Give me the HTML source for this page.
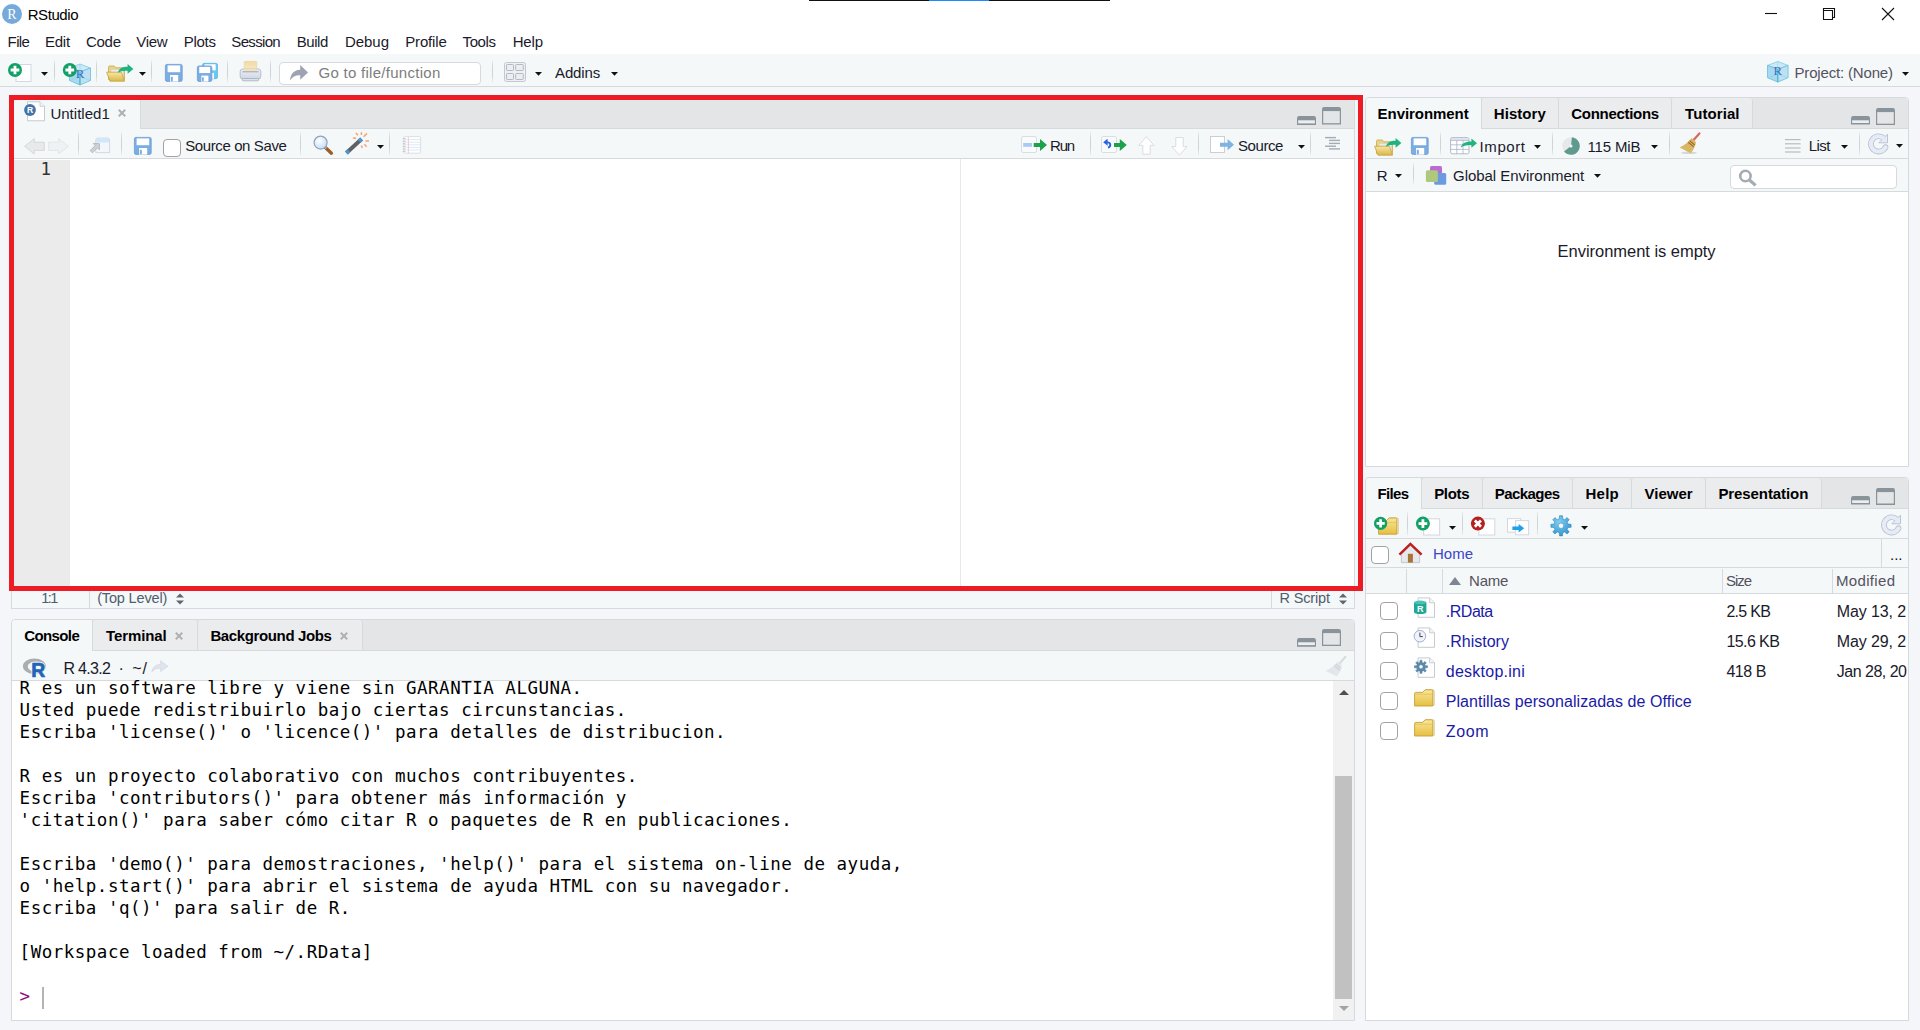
<!DOCTYPE html>
<html lang="es"><head><meta charset="utf-8"><title>RStudio</title>
<style>
html,body{margin:0;padding:0;}
body{width:1920px;height:1030px;overflow:hidden;background:#f4f6f9;position:relative;font-family:"Liberation Sans",sans-serif;}
.a{position:absolute;box-sizing:border-box;}
.t{position:absolute;white-space:pre;display:block;}
svg{position:absolute;overflow:visible;}
</style></head><body>
<div class="a" style="left:0px;top:0px;width:1920px;height:54px;background:#ffffff;"></div>
<div class="a" style="left:809px;top:0px;width:301px;height:1px;background:#111111;"></div>
<div class="a" style="left:929px;top:0px;width:60px;height:1px;background:#1a8cff;"></div>
<div class="a" style="left:2px;top:4px;width:20px;height:20px;border-radius:50%;background:#75aadb;"></div>
<svg style="left:1760px;top:4px" width="150" height="22" viewBox="0 0 150 22"><g fill="none" stroke="#111" stroke-width="1.1"><path d="M5 9.5H17"/><path d="M63.5 6.5V4.5H74.5V13.5H72.5M63.5 6.5H72.5V15.5H63.5Z"/><path d="M122 4L134 16M134 4L122 16"/></g></svg>
<div class="a" style="left:0px;top:54px;width:1920px;height:33px;background:#f4f8f9;border-bottom:1px solid #d6dadc;"></div>
<div class="a" style="left:54px;top:60px;width:1px;height:22px;background:linear-gradient(#e9edef,#cfd4d7 30%,#cfd4d7 70%,#e9edef);"></div>
<div class="a" style="left:96px;top:60px;width:1px;height:22px;background:linear-gradient(#e9edef,#cfd4d7 30%,#cfd4d7 70%,#e9edef);"></div>
<div class="a" style="left:151px;top:60px;width:1px;height:22px;background:linear-gradient(#e9edef,#cfd4d7 30%,#cfd4d7 70%,#e9edef);"></div>
<div class="a" style="left:227px;top:60px;width:1px;height:22px;background:linear-gradient(#e9edef,#cfd4d7 30%,#cfd4d7 70%,#e9edef);"></div>
<div class="a" style="left:270px;top:60px;width:1px;height:22px;background:linear-gradient(#e9edef,#cfd4d7 30%,#cfd4d7 70%,#e9edef);"></div>
<div class="a" style="left:492px;top:60px;width:1px;height:22px;background:linear-gradient(#e9edef,#cfd4d7 30%,#cfd4d7 70%,#e9edef);"></div>
<svg style="left:41px;top:71.5px" width="7" height="3.7" viewBox="0 0 7 3.7"><path d="M0 0H7L3.5 3.7Z" fill="#111"/></svg>
<svg style="left:139px;top:71.5px" width="7" height="3.7" viewBox="0 0 7 3.7"><path d="M0 0H7L3.5 3.7Z" fill="#111"/></svg>
<svg style="left:535px;top:71.5px" width="7" height="3.7" viewBox="0 0 7 3.7"><path d="M0 0H7L3.5 3.7Z" fill="#111"/></svg>
<svg style="left:610.5px;top:71.5px" width="7" height="3.7" viewBox="0 0 7 3.7"><path d="M0 0H7L3.5 3.7Z" fill="#111"/></svg>
<div class="a" style="left:279px;top:62px;width:202px;height:23px;background:#fff;border:1px solid #d6dadc;border-radius:4px;"></div>
<svg style="left:1902px;top:71.5px" width="7" height="3.7" viewBox="0 0 7 3.7"><path d="M0 0H7L3.5 3.7Z" fill="#111"/></svg>
<svg style="left:8px;top:63px" width="24" height="20" viewBox="0 0 24 20"><rect x="8" y="1.5" width="15" height="17" fill="#fff" stroke="#d3d8e0" stroke-width="1"/><circle cx="7" cy="7" r="7" fill="#12a067"/><path d="M2.66 5.6H5.6V2.66H8.4V5.6H11.34V8.4H8.4V11.34H5.6V8.4H2.66Z" fill="#fff"/></svg>
<svg style="left:62px;top:62px" width="30" height="24" viewBox="0 0 30 24"><path d="M18.00 2.00L28.50 6.00L18.00 10.00L7.50 6.00Z" fill="#cfe8f7" stroke="#7ccbe0" stroke-width="0.8" stroke-linejoin="round"/><path d="M7.50 6.00L18.00 10.00L18.00 23.00L7.50 18.50Z" fill="#a9d9ef" stroke="#63c0d8" stroke-width="0.8" stroke-linejoin="round"/><path d="M28.50 6.00L18.00 10.00L18.00 23.00L28.50 18.50Z" fill="#bfe0f4" stroke="#63c0d8" stroke-width="0.8" stroke-linejoin="round"/><path d="M18.00 2.00V15.00L7.50 18.50M18.00 15.00L28.50 18.50" fill="none" stroke="#7fd0e0" stroke-width="0.6" opacity="0.8"/><path d="M18.00 10.00V23.00" stroke="#3fb6cf" stroke-width="0.9"/><text x="18.00" y="16.20" text-anchor="middle" font-family="Liberation Serif,serif" font-size="13.0" fill="#3a6fbf">R</text><circle cx="7.8" cy="8" r="7" fill="#12a067"/><path d="M3.46 6.6H6.3999999999999995V3.66H9.2V6.6H12.14V9.4H9.2V12.34H6.3999999999999995V9.4H3.46Z" fill="#fff"/></svg>
<svg width="0" height="0" style="left:0;top:0"><defs><linearGradient id="gfold" x1="0" y1="0" x2="0" y2="1"><stop offset="0" stop-color="#f7e7a4"/><stop offset="1" stop-color="#dbb64c"/></linearGradient><linearGradient id="gprn" x1="0" y1="0" x2="0" y2="1"><stop offset="0" stop-color="#eef1f6"/><stop offset="1" stop-color="#cfd6e2"/></linearGradient><linearGradient id="gpap" x1="0" y1="0" x2="0" y2="1"><stop offset="0" stop-color="#f0d9a6"/><stop offset="1" stop-color="#f8ebca"/></linearGradient></defs></svg>
<svg style="left:106px;top:64px" width="28" height="19" viewBox="0 0 28 19"><g transform="translate(0 0)"><path d="M2.5 15.5V3.2Q2.5 2 3.7 2H8.2L10 3.8H17.3Q18.5 3.8 18.5 5V15.5Z" fill="#e9d28a" stroke="#c9a945" stroke-width="0.8"/><path d="M5 5.5H17.5V15H5Z" fill="#ebebeb" stroke="#cfcfcf" stroke-width="0.5"/><path d="M0.6 8.2H15.4L18.6 17.2H4Z" fill="url(#gfold)" stroke="#c9a239" stroke-width="0.8" stroke-linejoin="round"/><path d="M12 8.8C12.8 4.6 16.6 2.6 21.6 2.8V0L27.4 4.9L21.6 9.8V6.8C17.6 6.4 14.6 7 12 8.8Z" fill="#1fb37e"/></g></svg>
<svg style="left:165px;top:64px" width="18" height="18" viewBox="0 0 18 18"><rect x="0.40" y="0.40" width="16.80" height="17.00" rx="1.6" fill="#7aade2" stroke="#6a9bd6" stroke-width="0.8"/><rect x="2.60" y="1.40" width="12.60" height="6.80" fill="#fff"/><rect x="5.00" y="11.00" width="8.20" height="6.60" fill="#fff"/><rect x="5.80" y="12.80" width="2.00" height="4.40" fill="#7aade2"/></svg>
<svg style="left:197px;top:63px" width="22" height="19" viewBox="0 0 22 19"><rect x="5.55" y="0.36" width="14.89" height="15.28" rx="1.6" fill="#6cc7f0" stroke="#55b6e6" stroke-width="0.8"/><rect x="7.50" y="1.26" width="11.17" height="6.11" fill="#fff"/><rect x="9.63" y="9.89" width="7.27" height="5.93" fill="#fff"/><rect x="10.34" y="11.51" width="1.77" height="3.96" fill="#6cc7f0"/><rect x="0.35" y="2.96" width="14.51" height="15.47" rx="1.6" fill="#7aade2" stroke="#6a9bd6" stroke-width="0.8"/><rect x="2.25" y="3.87" width="10.88" height="6.19" fill="#fff"/><rect x="4.32" y="12.61" width="7.08" height="6.01" fill="#fff"/><rect x="5.01" y="14.25" width="1.73" height="4.00" fill="#7aade2"/></svg>
<svg style="left:239px;top:61px" width="24" height="21" viewBox="0 0 24 21"><rect x="5.2" y="0.3" width="12.6" height="10" rx="0.8" fill="url(#gpap)" stroke="#e9cf96" stroke-width="0.5"/><rect x="1.2" y="8" width="20.6" height="10" rx="2.6" fill="url(#gprn)" stroke="#a9b2c4" stroke-width="0.8"/><rect x="5.2" y="7.6" width="12.6" height="2.6" fill="#f3e2b8"/><path d="M3.4 10.8H19.6" stroke="#8f9ab0" stroke-width="0.9"/><rect x="3.4" y="17.6" width="16.2" height="2.2" rx="0.8" fill="#e3e7ee" stroke="#9aa4b8" stroke-width="0.7"/></svg>
<svg style="left:289px;top:64px" width="20" height="18" viewBox="0 0 20 18"><path d="M1 16.5C1.6 9.6 5.4 6 11.2 5.8V1L19 8.4L11.2 15.8V11.2C6.6 11 3.4 12.6 1 16.5Z" fill="#9ea2b2"/></svg>
<svg style="left:504px;top:62px" width="22" height="20" viewBox="0 0 22 20"><rect x="0.5" y="0.5" width="21" height="19" rx="2" fill="#eef0f3" stroke="#c3c9d2"/><g fill="#eceef1" stroke="#aab3c0" stroke-width="0.9"><rect x="2.5" y="2.5" width="7" height="6" rx="0.8"/><rect x="11.7" y="2.5" width="7.6" height="6" rx="0.8"/><rect x="2.5" y="11.5" width="7" height="6" rx="0.8"/><rect x="11.7" y="11.5" width="7.6" height="6" rx="0.8"/></g></svg>
<svg style="left:1767px;top:61px" width="22" height="22" viewBox="0 0 22 22"><path d="M10.79 0.50L21.08 4.42L10.79 8.34L0.50 4.42Z" fill="#cfe8f7" stroke="#7ccbe0" stroke-width="0.8" stroke-linejoin="round"/><path d="M0.50 4.42L10.79 8.34L10.79 21.08L0.50 16.67Z" fill="#a9d9ef" stroke="#63c0d8" stroke-width="0.8" stroke-linejoin="round"/><path d="M21.08 4.42L10.79 8.34L10.79 21.08L21.08 16.67Z" fill="#bfe0f4" stroke="#63c0d8" stroke-width="0.8" stroke-linejoin="round"/><path d="M10.79 0.50V13.24L0.50 16.67M10.79 13.24L21.08 16.67" fill="none" stroke="#7fd0e0" stroke-width="0.6" opacity="0.8"/><path d="M10.79 8.34V21.08" stroke="#3fb6cf" stroke-width="0.9"/><text x="10.79" y="14.42" text-anchor="middle" font-family="Liberation Serif,serif" font-size="12.7" fill="#3a6fbf">R</text></svg>
<div class="a" style="left:11px;top:97px;width:1344px;height:494px;background:#fff;border:1px solid #d6dadc;"></div>
<div class="a" style="left:14px;top:100px;width:1340px;height:29px;background:#e4e5e7;border-bottom:1px solid #d6dadc;"></div>
<div class="a" style="left:14px;top:100px;width:127px;height:29px;background:#f4f8f9;border-right:1px solid #d6dadc;"></div>
<div class="a" style="left:14px;top:129px;width:1340px;height:30px;background:#f4f8f9;border-bottom:1px solid #d6dadc;"></div>
<div class="a" style="left:14px;top:160px;width:56px;height:426px;background:#ebebeb;"></div>
<div class="a" style="left:960px;top:159px;width:1px;height:427px;background:#e8e8e8;"></div>
<div class="a" style="left:78px;top:132px;width:1px;height:23px;background:linear-gradient(#e9edef,#cfd4d7 30%,#cfd4d7 70%,#e9edef);"></div>
<div class="a" style="left:121px;top:132px;width:1px;height:23px;background:linear-gradient(#e9edef,#cfd4d7 30%,#cfd4d7 70%,#e9edef);"></div>
<div class="a" style="left:300px;top:132px;width:1px;height:23px;background:linear-gradient(#e9edef,#cfd4d7 30%,#cfd4d7 70%,#e9edef);"></div>
<div class="a" style="left:389px;top:132px;width:1px;height:23px;background:linear-gradient(#e9edef,#cfd4d7 30%,#cfd4d7 70%,#e9edef);"></div>
<div class="a" style="left:1090px;top:132px;width:1px;height:23px;background:linear-gradient(#e9edef,#cfd4d7 30%,#cfd4d7 70%,#e9edef);"></div>
<div class="a" style="left:1198px;top:132px;width:1px;height:23px;background:linear-gradient(#e9edef,#cfd4d7 30%,#cfd4d7 70%,#e9edef);"></div>
<div class="a" style="left:1310px;top:132px;width:1px;height:23px;background:linear-gradient(#e9edef,#cfd4d7 30%,#cfd4d7 70%,#e9edef);"></div>
<svg style="left:377px;top:145.2px" width="7" height="3.7" viewBox="0 0 7 3.7"><path d="M0 0H7L3.5 3.7Z" fill="#111"/></svg>
<svg style="left:1297.5px;top:144.6px" width="7" height="3.7" viewBox="0 0 7 3.7"><path d="M0 0H7L3.5 3.7Z" fill="#111"/></svg>
<div class="a" style="left:163px;top:139px;width:18px;height:18px;background:#fff;border:1px solid #a2a2a2;border-radius:4px;"></div>
<svg style="left:23px;top:101px" width="23" height="21" viewBox="0 0 23 21"><path d="M4.5 0.8H17L21.5 5.3V19.8H4.5Z" fill="#fff" stroke="#bfc5cc" stroke-width="0.9" stroke-linejoin="round"/><path d="M17 0.8V5.3H21.5" fill="#f2f4f6" stroke="#bfc5cc" stroke-width="0.8" stroke-linejoin="round"/><circle cx="7" cy="9" r="5.9" fill="#4573aa"/><text x="7" y="12.1" text-anchor="middle" font-family="Liberation Sans,sans-serif" font-weight="700" font-size="8.6" fill="#fff">R</text></svg>
<svg style="left:118px;top:109px" width="8" height="8" viewBox="0 0 8 8"><path d="M0.8 0.8L7.2 7.2M7.2 0.8L0.8 7.2" stroke="#adb1b5" stroke-width="2" fill="none"/></svg>
<svg style="left:24px;top:138px" width="21" height="17" viewBox="0 0 21 17"><path d="M0.6 8.3L10.3 0.6V4.2H20.3V12.4H10.3V16L0.6 8.3Z" fill="#e7e9eb" stroke="#d2d5d8" stroke-width="0.9" stroke-linejoin="round"/></svg>
<svg style="left:48px;top:138px" width="21" height="17" viewBox="0 0 21 17"><path d="M20.4 8.3L10.7 0.6V4.2H0.7V12.4H10.7V16L20.4 8.3Z" fill="#eff2f4" stroke="#e0e3e6" stroke-width="0.9" stroke-linejoin="round"/></svg>
<svg style="left:89px;top:137px" width="22" height="17" viewBox="0 0 22 17"><path d="M6.8 3Q6.8 1 8.8 1H18.6Q20.6 1 20.6 3V15.6H6.8Z" fill="#f3f6fa" stroke="#c9d1dc" stroke-width="0.8"/><path d="M7.2 3Q7.2 1.4 8.8 1.4H18.6Q20.2 1.4 20.2 3V5.4H7.2Z" fill="#d2e6fb"/><path d="M1.2 13.6L6.2 8.6L4.2 6.6H10.4V12.8L8.4 10.8L3.4 15.8Z" fill="#cdd2d8" stroke="#a4aab2" stroke-width="0.7" stroke-linejoin="round"/></svg>
<svg style="left:134px;top:137px" width="18" height="18" viewBox="0 0 18 18"><rect x="0.40" y="0.40" width="16.80" height="17.00" rx="1.6" fill="#7aade2" stroke="#6a9bd6" stroke-width="0.8"/><rect x="2.60" y="1.40" width="12.60" height="6.80" fill="#fff"/><rect x="5.00" y="11.00" width="8.20" height="6.60" fill="#fff"/><rect x="5.80" y="12.80" width="2.00" height="4.40" fill="#7aade2"/></svg>
<svg width="0" height="0" style="left:0;top:0"><defs><radialGradient id="glens" cx="0.4" cy="0.35" r="0.7"><stop offset="0" stop-color="#ffffff"/><stop offset="1" stop-color="#c3dbf6"/></radialGradient></defs></svg>
<svg style="left:312.5px;top:134.6px" width="21" height="21" viewBox="0 0 21 21"><g transform="translate(0 0)"><path d="M12.4 12.6L18.4 18.2" stroke="#9c5e27" stroke-width="3.4" stroke-linecap="round"/><path d="M11.2 11.4L13.4 13.4" stroke="#7fb0d8" stroke-width="2.4"/><circle cx="7.6" cy="7.6" r="6.5" fill="url(#glens)" stroke="#8ea2ba" stroke-width="1.2"/></g></svg>
<svg style="left:343px;top:131px" width="28" height="24" viewBox="0 0 28 24"><path d="M3.4 22L18.6 8" stroke="#5e6266" stroke-width="4" /><path d="M3.4 22L5.8 19.8" stroke="#4a96cf" stroke-width="4.2"/><path d="M16.2 10.2L18.6 8" stroke="#4a96cf" stroke-width="4.2"/><g stroke="#f6a273" stroke-width="1.5" stroke-linecap="butt"><path d="M18.4 1.2V4"/><path d="M12.8 2L15 4.2"/><path d="M10 6.8L13.2 7.6"/><path d="M24 2.4L20.6 5.8"/><path d="M22.4 10H26"/><path d="M21.4 13.2L23.6 15.8"/><path d="M18.4 14.6L19.2 17"/></g></svg>
<svg style="left:402px;top:136px" width="20" height="18" viewBox="0 0 20 18"><rect x="2" y="0.6" width="16.6" height="16.6" rx="1.2" fill="#fff" stroke="#d4d7db" stroke-width="0.8"/><g stroke="#cfe0f5" stroke-width="0.7"><path d="M3 3.6H18"/><path d="M3 6.2H18"/><path d="M3 8.8H18"/><path d="M3 11.4H18"/><path d="M3 14H18"/></g><path d="M6.4 1V17" stroke="#f4b8b8" stroke-width="0.7"/><g stroke="#b9bdc2" stroke-width="0.9"><path d="M0.8 2.6H3.6"/><path d="M0.8 5.2H3.6"/><path d="M0.8 7.8H3.6"/><path d="M0.8 10.4H3.6"/><path d="M0.8 13H3.6"/><path d="M0.8 15.4H3.6"/></g></svg>
<svg style="left:1021px;top:136px" width="27" height="17" viewBox="0 0 27 17"><rect x="0.5" y="0.5" width="15" height="16" rx="1.6" fill="#f9fafc" stroke="#d6dade" stroke-width="0.9"/><rect x="2.2" y="7" width="8.8" height="3.8" fill="#a9c8f5"/><path d="M12.7 6.9H19V3L26 9L19 15V11.1H12.7Z" fill="#1ba24b"/></svg>
<svg style="left:1101px;top:136px" width="27" height="17" viewBox="0 0 27 17"><rect x="0.5" y="0.5" width="15" height="16" rx="1.6" fill="#f9fafc" stroke="#d6dade" stroke-width="0.9"/><path d="M7 11.6C10.2 10.6 10.2 6.2 6 6.4" fill="none" stroke="#2a62e6" stroke-width="1.9"/><path d="M2.2 6.2L6.6 2.8V9.8Z" fill="#2a62e6"/><path d="M13 6.9H18.8V3L25.8 9L18.8 15V11.1H13Z" fill="#1ba24b"/></svg>
<svg style="left:1137.5px;top:136px" width="17" height="19" viewBox="0 0 17 19"><path d="M8.4 0.6L16 9.4H12.2V18.2H4.8V9.4H0.8Z" fill="#fff" stroke="#d6d9dd" stroke-width="0.9" stroke-linejoin="round"/></svg>
<svg style="left:1170.5px;top:137px" width="17" height="19" viewBox="0 0 17 19"><path d="M8.4 18.2L16 9.6H12.2V0.6H4.8V9.6H0.8Z" fill="#fff" stroke="#d6d9dd" stroke-width="0.9" stroke-linejoin="round"/></svg>
<svg style="left:1210px;top:136px" width="25" height="17" viewBox="0 0 25 17"><rect x="0.5" y="0.5" width="14" height="16" fill="#fff" stroke="#c6cacf" stroke-width="0.9"/><path d="M10 6.699999999999999H17.6V3.0999999999999996L24 8.7L17.6 14.299999999999999V10.7H10Z" fill="#7fb3e1"/></svg>
<svg style="left:1324px;top:136px" width="18" height="15" viewBox="0 0 18 15"><g stroke="#a3abb3" stroke-width="1.4"><path d="M1 1.6H12"/><path d="M5 4.4H16"/><path d="M5 7.4H16"/><path d="M1 10.2H12"/><path d="M5 12.9H16"/></g></svg>
<svg style="left:1297px;top:115.7px" width="19" height="9" viewBox="0 0 19 9"><path d="M0 9V2.2Q0 0 2.2 0H16.8Q19 0 19 2.2V9Z" fill="#89939b"/><rect x="1.1" y="4.3" width="16.8" height="3.10" fill="#eceeef"/></svg>
<svg style="left:1322px;top:107.1px" width="19" height="17.6" viewBox="0 0 19 17.6"><path d="M0 17.6V2.2Q0 0 2.2 0H16.8Q19 0 19 2.2V17.6Z" fill="#89939b"/><rect x="1.2" y="4.1" width="16.6" height="12.10" fill="#e4e5e7"/></svg>
<div class="a" style="left:11px;top:591px;width:1344px;height:18px;background:#f4f8f9;border:1px solid #d6dadc;border-top:none;"></div>
<div class="a" style="left:89px;top:591px;width:1px;height:17px;background:#d6dadc;"></div>
<div class="a" style="left:1271px;top:591px;width:1px;height:17px;background:#d6dadc;"></div>
<svg style="left:175.5px;top:593.3px" width="8" height="12" viewBox="0 0 8 12"><path d="M0 4.5H8L4 0.5Z M0 7.5H8L4 11.5Z" fill="#5f6670"/></svg>
<svg style="left:1338.7px;top:593.3px" width="8" height="12" viewBox="0 0 8 12"><path d="M0 4.5H8L4 0.5Z M0 7.5H8L4 11.5Z" fill="#5f6670"/></svg>
<div class="a" style="left:11px;top:619px;width:1344px;height:402px;background:#fff;border:1px solid #d6dadc;border-radius:4px 4px 0 0;"></div>
<div class="a" style="left:12px;top:620px;width:1342px;height:31px;background:#e4e5e7;border-bottom:1px solid #d6dadc;border-radius:4px 4px 0 0;"></div>
<div class="a" style="left:12px;top:620px;width:81px;height:31px;background:#f4f8f9;border-right:1px solid #d6dadc;border-radius:4px 0 0 0;"></div>
<div class="a" style="left:93px;top:620px;width:105px;height:30px;background:#ebecee;border-right:1px solid #d6dadc;border-radius:3px 3px 0 0;"></div>
<div class="a" style="left:198px;top:620px;width:165px;height:30px;background:#ebecee;border-right:1px solid #d6dadc;border-radius:3px 3px 0 0;"></div>
<div class="a" style="left:12px;top:651px;width:1342px;height:30px;background:#f4f8f9;border-bottom:1px solid #d6dadc;"></div>
<div class="a" style="left:1333px;top:681px;width:21px;height:339px;background:#f1f1f1;"></div>
<div class="a" style="left:1335px;top:776px;width:17px;height:223px;background:#c1c1c1;"></div>
<svg style="left:1338.5px;top:690px" width="10" height="5" viewBox="0 0 10 5"><path d="M0 5H10L5 0Z" fill="#505050"/></svg>
<svg style="left:1338.5px;top:1006px" width="10" height="5" viewBox="0 0 10 5"><path d="M0 0H10L5 5Z" fill="#a3a3a3"/></svg>
<div class="a" style="left:42px;top:987px;width:2px;height:22px;background:#b4b4b4;"></div>
<div class="a" style="left:1365px;top:97px;width:544px;height:370px;background:#fff;border:1px solid #d6dadc;border-radius:4px 4px 0 0;"></div>
<div class="a" style="left:1366px;top:98px;width:542px;height:31px;background:#e4e5e7;border-bottom:1px solid #d6dadc;border-radius:3px 3px 0 0;"></div>
<div class="a" style="left:1366px;top:98px;width:116px;height:31px;background:#f4f8f9;border-right:1px solid #d6dadc;border-radius:4px 0 0 0;"></div>
<div class="a" style="left:1482px;top:98px;width:77px;height:30px;background:#ebecee;border-right:1px solid #d6dadc;border-radius:3px 3px 0 0;"></div>
<div class="a" style="left:1559px;top:98px;width:113px;height:30px;background:#ebecee;border-right:1px solid #d6dadc;border-radius:3px 3px 0 0;"></div>
<div class="a" style="left:1672px;top:98px;width:81px;height:30px;background:#ebecee;border-right:1px solid #d6dadc;border-radius:3px 3px 0 0;"></div>
<div class="a" style="left:1366px;top:129px;width:542px;height:30px;background:#f4f8f9;border-bottom:1px solid #d6dadc;"></div>
<div class="a" style="left:1366px;top:159px;width:542px;height:33px;background:#f4f8f9;border-bottom:1px solid #d6dadc;"></div>
<div class="a" style="left:1440px;top:132px;width:1px;height:23px;background:linear-gradient(#e9edef,#cfd4d7 30%,#cfd4d7 70%,#e9edef);"></div>
<div class="a" style="left:1552px;top:132px;width:1px;height:23px;background:linear-gradient(#e9edef,#cfd4d7 30%,#cfd4d7 70%,#e9edef);"></div>
<div class="a" style="left:1669px;top:132px;width:1px;height:23px;background:linear-gradient(#e9edef,#cfd4d7 30%,#cfd4d7 70%,#e9edef);"></div>
<div class="a" style="left:1859px;top:132px;width:1px;height:23px;background:linear-gradient(#e9edef,#cfd4d7 30%,#cfd4d7 70%,#e9edef);"></div>
<div class="a" style="left:1413px;top:163px;width:1px;height:21px;background:linear-gradient(#e9edef,#cfd4d7 30%,#cfd4d7 70%,#e9edef);"></div>
<svg style="left:1533.5px;top:144.5px" width="7" height="3.7" viewBox="0 0 7 3.7"><path d="M0 0H7L3.5 3.7Z" fill="#111"/></svg>
<svg style="left:1651px;top:144.5px" width="7" height="3.7" viewBox="0 0 7 3.7"><path d="M0 0H7L3.5 3.7Z" fill="#111"/></svg>
<svg style="left:1841px;top:144.5px" width="7" height="3.7" viewBox="0 0 7 3.7"><path d="M0 0H7L3.5 3.7Z" fill="#111"/></svg>
<svg style="left:1896px;top:144.4px" width="7" height="3.7" viewBox="0 0 7 3.7"><path d="M0 0H7L3.5 3.7Z" fill="#111"/></svg>
<svg style="left:1395px;top:173.5px" width="7" height="3.7" viewBox="0 0 7 3.7"><path d="M0 0H7L3.5 3.7Z" fill="#111"/></svg>
<svg style="left:1594px;top:173.5px" width="7" height="3.7" viewBox="0 0 7 3.7"><path d="M0 0H7L3.5 3.7Z" fill="#111"/></svg>
<div class="a" style="left:1730px;top:165px;width:167px;height:24px;background:#fff;border:1px solid #d6dadc;border-radius:4px;"></div>
<div class="a" style="left:1365px;top:477px;width:544px;height:544px;background:#fff;border:1px solid #d6dadc;border-radius:4px 4px 0 0;"></div>
<div class="a" style="left:1366px;top:478px;width:542px;height:31px;background:#e4e5e7;border-bottom:1px solid #d6dadc;border-radius:4px 4px 0 0;"></div>
<div class="a" style="left:1366px;top:478px;width:56px;height:31px;background:#f4f8f9;border-right:1px solid #d6dadc;border-radius:4px 0 0 0;"></div>
<div class="a" style="left:1422px;top:478px;width:61px;height:30px;background:#ebecee;border-right:1px solid #d6dadc;border-radius:4px 4px 0 0;"></div>
<div class="a" style="left:1483px;top:478px;width:90px;height:30px;background:#ebecee;border-right:1px solid #d6dadc;border-radius:4px 4px 0 0;"></div>
<div class="a" style="left:1573px;top:478px;width:59px;height:30px;background:#ebecee;border-right:1px solid #d6dadc;border-radius:4px 4px 0 0;"></div>
<div class="a" style="left:1632px;top:478px;width:74px;height:30px;background:#ebecee;border-right:1px solid #d6dadc;border-radius:4px 4px 0 0;"></div>
<div class="a" style="left:1706px;top:478px;width:116px;height:30px;background:#ebecee;border-right:1px solid #d6dadc;border-radius:4px 4px 0 0;"></div>
<div class="a" style="left:1366px;top:509px;width:542px;height:30px;background:#f4f8f9;border-bottom:1px solid #d6dadc;"></div>
<div class="a" style="left:1366px;top:539px;width:542px;height:29px;background:#f4f8f9;border-bottom:1px solid #d6dadc;"></div>
<div class="a" style="left:1366px;top:568px;width:542px;height:26px;background:#f4f8f9;border-bottom:1px solid #d6dadc;"></div>
<div class="a" style="left:1407px;top:512px;width:1px;height:23px;background:linear-gradient(#e9edef,#cfd4d7 30%,#cfd4d7 70%,#e9edef);"></div>
<div class="a" style="left:1462px;top:512px;width:1px;height:23px;background:linear-gradient(#e9edef,#cfd4d7 30%,#cfd4d7 70%,#e9edef);"></div>
<div class="a" style="left:1537px;top:512px;width:1px;height:23px;background:linear-gradient(#e9edef,#cfd4d7 30%,#cfd4d7 70%,#e9edef);"></div>
<svg style="left:1449px;top:525.5px" width="7" height="3.7" viewBox="0 0 7 3.7"><path d="M0 0H7L3.5 3.7Z" fill="#111"/></svg>
<svg style="left:1581px;top:525.5px" width="7" height="3.7" viewBox="0 0 7 3.7"><path d="M0 0H7L3.5 3.7Z" fill="#111"/></svg>
<div class="a" style="left:1881px;top:539px;width:1px;height:28px;background:#d6dadc;"></div>
<div class="a" style="left:1371px;top:546px;width:18px;height:18px;background:#fff;border:1px solid #a2a2a2;border-radius:4px;"></div>
<div class="a" style="left:1406px;top:569px;width:1px;height:24px;background:#d6dadc;"></div>
<div class="a" style="left:1442px;top:569px;width:1px;height:24px;background:#d6dadc;"></div>
<div class="a" style="left:1722px;top:569px;width:1px;height:24px;background:#d6dadc;"></div>
<div class="a" style="left:1832px;top:569px;width:1px;height:24px;background:#d6dadc;"></div>
<svg style="left:1449px;top:576.5px" width="12" height="8" viewBox="0 0 12 8"><path d="M0 8H12L6 0Z" fill="#7d8794"/></svg>
<div class="a" style="left:1380px;top:602px;width:18px;height:18px;background:#fff;border:1px solid #a2a2a2;border-radius:4px;"></div>
<div class="a" style="left:1380px;top:632px;width:18px;height:18px;background:#fff;border:1px solid #a2a2a2;border-radius:4px;"></div>
<div class="a" style="left:1380px;top:662px;width:18px;height:18px;background:#fff;border:1px solid #a2a2a2;border-radius:4px;"></div>
<div class="a" style="left:1380px;top:692px;width:18px;height:18px;background:#fff;border:1px solid #a2a2a2;border-radius:4px;"></div>
<div class="a" style="left:1380px;top:722px;width:18px;height:18px;background:#fff;border:1px solid #a2a2a2;border-radius:4px;"></div>
<svg style="left:175px;top:632px" width="8" height="8" viewBox="0 0 8 8"><path d="M0.8 0.8L7.2 7.2M7.2 0.8L0.8 7.2" stroke="#adb1b5" stroke-width="2" fill="none"/></svg>
<svg style="left:340px;top:632px" width="8" height="8" viewBox="0 0 8 8"><path d="M0.8 0.8L7.2 7.2M7.2 0.8L0.8 7.2" stroke="#adb1b5" stroke-width="2" fill="none"/></svg>
<svg style="left:1297px;top:637.5px" width="19" height="8.7" viewBox="0 0 19 8.7"><path d="M0 8.7V2.2Q0 0 2.2 0H16.8Q19 0 19 2.2V8.7Z" fill="#89939b"/><rect x="1.1" y="4.3" width="16.8" height="2.80" fill="#eceeef"/></svg>
<svg style="left:1322px;top:629.1px" width="19" height="17.1" viewBox="0 0 19 17.1"><path d="M0 17.1V2.2Q0 0 2.2 0H16.8Q19 0 19 2.2V17.1Z" fill="#89939b"/><rect x="1.2" y="4.1" width="16.6" height="11.60" fill="#e4e5e7"/></svg>
<svg style="left:22px;top:657px" width="26" height="21" viewBox="0 0 26 21"><path fill-rule="evenodd" fill="#abadb1" d="M0.9 9.2A11.5 7.8 0 1 0 23.9 9.2A11.5 7.8 0 1 0 0.9 9.2ZM5.7 9.6A8.3 5 0 1 0 22.3 9.6A8.3 5 0 1 0 5.7 9.6Z"/><text x="9.3" y="19.9" font-family="Liberation Sans,sans-serif" font-weight="700" font-size="19.4" fill="#f4f8f9" stroke="#f4f8f9" stroke-width="2.2" stroke-linejoin="round" aria-hidden="true">R</text><text x="9.3" y="19.9" font-family="Liberation Sans,sans-serif" font-weight="700" font-size="19.4" fill="#2165b8" stroke="#2165b8" stroke-width="0.7" stroke-linejoin="round">R</text></svg>
<svg style="left:151px;top:660px" width="18" height="13" viewBox="0 0 18 13"><path d="M0.8 12C1.6 7 4.6 4.6 9.6 4.4V0.8L17 6.2L9.6 11.6V8.2C5.8 8 3 9.2 0.8 12Z" fill="#dfe4ec" stroke="#cfd5e0" stroke-width="0.6"/></svg>
<svg style="left:1321px;top:655px" width="27" height="23" viewBox="0 0 27 23"><g transform="translate(4 1)"><path d="M14.6 7.4L20.4 0.8" stroke="#d9dde2" stroke-width="2.2" stroke-linecap="round"/><path d="M12.6 5.4L17 9.6C16.4 13 14.6 17.4 11.6 20.6L0.6 14.8C5 12.8 9.6 9.4 12.6 5.4Z" fill="#e3e6ea"/><path d="M10.6 8L15.8 12.4M9.2 9.6L14.8 14.2" stroke="#cfd3d8" stroke-width="1.1" fill="none"/></g></svg>
<svg style="left:1851.3px;top:116.10000000000001px" width="19" height="8.6" viewBox="0 0 19 8.6"><path d="M0 8.6V2.2Q0 0 2.2 0H16.8Q19 0 19 2.2V8.6Z" fill="#89939b"/><rect x="1.1" y="4.3" width="16.8" height="2.70" fill="#eceeef"/></svg>
<svg style="left:1876.2px;top:107.6px" width="19" height="17.1" viewBox="0 0 19 17.1"><path d="M0 17.1V2.2Q0 0 2.2 0H16.8Q19 0 19 2.2V17.1Z" fill="#89939b"/><rect x="1.2" y="4.1" width="16.6" height="11.60" fill="#e4e5e7"/></svg>
<svg style="left:1374px;top:137.5px" width="28" height="19" viewBox="0 0 28 19"><g transform="translate(0 0)"><path d="M2.5 15.5V3.2Q2.5 2 3.7 2H8.2L10 3.8H17.3Q18.5 3.8 18.5 5V15.5Z" fill="#e9d28a" stroke="#c9a945" stroke-width="0.8"/><path d="M5 5.5H17.5V15H5Z" fill="#ebebeb" stroke="#cfcfcf" stroke-width="0.5"/><path d="M0.6 8.2H15.4L18.6 17.2H4Z" fill="url(#gfold)" stroke="#c9a239" stroke-width="0.8" stroke-linejoin="round"/><path d="M12 8.8C12.8 4.6 16.6 2.6 21.6 2.8V0L27.4 4.9L21.6 9.8V6.8C17.6 6.4 14.6 7 12 8.8Z" fill="#1fb37e"/></g></svg>
<svg style="left:1411px;top:137px" width="18" height="18" viewBox="0 0 18 18"><rect x="0.40" y="0.40" width="16.80" height="17.00" rx="1.6" fill="#7aade2" stroke="#6a9bd6" stroke-width="0.8"/><rect x="2.60" y="1.40" width="12.60" height="6.80" fill="#fff"/><rect x="5.00" y="11.00" width="8.20" height="6.60" fill="#fff"/><rect x="5.80" y="12.80" width="2.00" height="4.40" fill="#7aade2"/></svg>
<svg style="left:1449.5px;top:137px" width="28" height="18" viewBox="0 0 28 18"><rect x="0.6" y="0.6" width="18.4" height="16.2" rx="1.6" fill="#fff" stroke="#a9b2c6" stroke-width="0.9"/><path d="M1 2.2Q1 1 2.2 1H17.4Q18.6 1 18.6 2.2V3.2H1Z" fill="#dfe5ee"/><g stroke="#a9b2c6" stroke-width="0.8"><path d="M0.6 3.4H19"/><path d="M0.6 7.8H19"/><path d="M0.6 12.4H19"/><path d="M6.8 3.4V16.8"/><path d="M13 3.4V16.8"/></g><path d="M10.6 10.8C11.6 6.4 15.6 4.2 21.4 4.4V1.6L27 6.2L21.4 10.8V8.2C17 7.8 13.6 8.6 10.6 10.8Z" fill="#1fb37e"/></svg>
<svg style="left:1562px;top:137px" width="18" height="18" viewBox="0 0 18 18"><circle cx="9" cy="9" r="8.8" fill="#e6e8ea"/><path d="M9 9L9.88 0.24A8.8 8.8 0 1 1 2.05 14.39Z" fill="#5f9a8f"/><circle cx="9" cy="9" r="1.5" fill="#f4f8f9"/></svg>
<svg style="left:1677px;top:132px" width="26" height="23" viewBox="0 0 26 23"><g transform="translate(2 0.6)"><ellipse cx="10" cy="20.2" rx="8" ry="1.3" fill="#c8c8c8" opacity="0.7"/><path d="M14.6 7.4L20.4 0.8" stroke="#d9695d" stroke-width="2.2" stroke-linecap="round"/><path d="M12.6 5.4L17 9.6C16.4 13 14.6 17.4 11.6 20.6L0.6 14.8C5 12.8 9.6 9.4 12.6 5.4Z" fill="#dab765"/><path d="M10.6 8L15.8 12.4M9.2 9.6L14.8 14.2" stroke="#9c6a30" stroke-width="1.1" fill="none"/></g></svg>
<svg style="left:1785px;top:138px" width="16" height="15" viewBox="0 0 16 15"><g stroke="#b6bcc2" stroke-width="1.2"><path d="M0 1.6H15.6"/><path d="M0 5.8H15.6"/><path d="M0 10H15.6"/><path d="M0 14H15.6"/></g></svg>
<svg style="left:1868px;top:133px" width="21" height="22" viewBox="0 0 21 22"><g transform="translate(0 0)" fill="none"><path d="M16.0 5.5A7.65 7.65 0 1 0 17.53 14.13" stroke="#b7bfcc" stroke-width="5.6"/><circle cx="17.53" cy="14.13" r="2.8" fill="#b7bfcc"/><path d="M19.5 1.1V9.8H10.8Z" fill="#e6ecf7" stroke="#b7bfcc" stroke-width="0.9" stroke-linejoin="miter"/><path d="M16.0 5.5A7.65 7.65 0 1 0 17.53 14.13" stroke="#e6ecf7" stroke-width="4.0"/><circle cx="17.53" cy="14.13" r="2.0" fill="#e6ecf7"/></g></svg>
<svg style="left:1425px;top:165px" width="22" height="21" viewBox="0 0 22 21"><rect x="5" y="1" width="12" height="11.8" rx="1.6" fill="#bb6bd0"/><rect x="9.2" y="8" width="12" height="11.8" rx="1.6" fill="#6a9be0"/><rect x="0.9" y="5.2" width="12" height="11.8" rx="1.6" fill="#aec87e"/></svg>
<svg style="left:1738px;top:169px" width="20" height="18" viewBox="0 0 20 18"><circle cx="7.4" cy="7" r="5.2" fill="none" stroke="#a4abb3" stroke-width="2.6"/><path d="M11.2 10.8L17.6 16.4" stroke="#a4abb3" stroke-width="3.2" stroke-linecap="butt"/></svg>
<svg style="left:1851.3px;top:496.2px" width="19" height="8.6" viewBox="0 0 19 8.6"><path d="M0 8.6V2.2Q0 0 2.2 0H16.8Q19 0 19 2.2V8.6Z" fill="#89939b"/><rect x="1.1" y="4.3" width="16.8" height="2.70" fill="#eceeef"/></svg>
<svg style="left:1876.2px;top:487.90000000000003px" width="19" height="16.9" viewBox="0 0 19 16.9"><path d="M0 16.9V2.2Q0 0 2.2 0H16.8Q19 0 19 2.2V16.9Z" fill="#89939b"/><rect x="1.2" y="4.1" width="16.6" height="11.40" fill="#e4e5e7"/></svg>
<svg width="0" height="0" style="left:0;top:0"><defs><linearGradient id="gfld2" x1="0" y1="0" x2="0" y2="1"><stop offset="0" stop-color="#f8e79a"/><stop offset="1" stop-color="#e6bf42"/></linearGradient><radialGradient id="ggear" cx="0.4" cy="0.3" r="0.8"><stop offset="0" stop-color="#7fcdf0"/><stop offset="1" stop-color="#2f8fca"/></radialGradient></defs></svg>
<svg style="left:1373px;top:516px" width="27" height="19" viewBox="0 0 27 19"><g transform="translate(5 1.2)"><path d="M8.6 3.4L11.2 0.6H18.6Q20.4 0.6 20.4 2.4V16.2H8.6Z" fill="#efe9d2" stroke="#d8c48a" stroke-width="0.7"/><path d="M0.6 4.6Q0.6 3.4 1.8 3.4H8.6L11.2 0.8H17.6Q18.8 0.8 18.8 2V17.0H0.6Z" fill="url(#gfld2)" stroke="#c9a030" stroke-width="0.9" stroke-linejoin="round"/><path d="M1 5.2H18.4" stroke="#d0a838" stroke-width="0.6" opacity="0.7"/></g><circle cx="7.6" cy="7.4" r="6.6" fill="#12a067"/><path d="M3.508 6.08H6.279999999999999V3.3080000000000007H8.92V6.08H11.692V8.72H8.92V11.492H6.279999999999999V8.72H3.508Z" fill="#fff"/></svg>
<svg style="left:1415px;top:516px" width="26" height="20" viewBox="0 0 26 20"><rect x="8.6" y="2.8" width="16" height="16.2" fill="#fff" stroke="#d3d8e0" stroke-width="1"/><circle cx="7.9" cy="7.6" r="7" fill="#12a067"/><path d="M3.5600000000000005 6.199999999999999H6.5V3.26H9.3V6.199999999999999H12.24V9.0H9.3V11.94H6.5V9.0H3.5600000000000005Z" fill="#fff"/></svg>
<svg style="left:1470px;top:516px" width="26" height="20" viewBox="0 0 26 20"><rect x="8.8" y="2.8" width="16" height="16.2" fill="#fff" stroke="#d3d8e0" stroke-width="1"/><circle cx="7.9" cy="7.6" r="7" fill="#b5201e"/><path transform="rotate(45 7.9 7.6)" d="M3.5600000000000005 6.199999999999999H6.5V3.26H9.3V6.199999999999999H12.24V9.0H9.3V11.94H6.5V9.0H3.5600000000000005Z" fill="#fff"/></svg>
<svg style="left:1507px;top:518px" width="23" height="18" viewBox="0 0 23 18"><rect x="0.5" y="0.6" width="13.2" height="13.6" fill="#fff" stroke="#d3d8e0" stroke-width="1"/><rect x="8.6" y="2.6" width="13" height="14.2" fill="#fff" stroke="#d3d8e0" stroke-width="1"/><path d="M5.4 8.4H11.6V6L17.2 10.2L11.6 14.4V12H5.4Z" fill="#1fa0e8"/></svg>
<svg style="left:1550px;top:515px" width="22" height="22" viewBox="0 0 22 22"><path d="M9.32 3.80L9.48 0.71L12.52 0.71L12.68 3.80L14.76 4.66L17.06 2.60L19.20 4.74L17.14 7.04L18.00 9.12L21.09 9.28L21.09 12.32L18.00 12.48L17.14 14.56L19.20 16.86L17.06 19.00L14.76 16.94L12.68 17.80L12.52 20.89L9.48 20.89L9.32 17.80L7.24 16.94L4.94 19.00L2.80 16.86L4.86 14.56L4.00 12.48L0.91 12.32L0.91 9.28L4.00 9.12L4.86 7.04L2.80 4.74L4.94 2.60L7.24 4.66Z" fill="url(#ggear)" stroke="#2b86bd" stroke-width="0.6" stroke-linejoin="round"/><circle cx="11" cy="10.8" r="2.7" fill="#f4f8f9" stroke="#2b86bd" stroke-width="0.5"/></svg>
<svg style="left:1881.3px;top:514.3px" width="21" height="22" viewBox="0 0 21 22"><g transform="translate(0 0)" fill="none"><path d="M16.0 5.5A7.65 7.65 0 1 0 17.53 14.13" stroke="#b7bfcc" stroke-width="5.6"/><circle cx="17.53" cy="14.13" r="2.8" fill="#b7bfcc"/><path d="M19.5 1.1V9.8H10.8Z" fill="#e6ecf7" stroke="#b7bfcc" stroke-width="0.9" stroke-linejoin="miter"/><path d="M16.0 5.5A7.65 7.65 0 1 0 17.53 14.13" stroke="#e6ecf7" stroke-width="4.0"/><circle cx="17.53" cy="14.13" r="2.0" fill="#e6ecf7"/></g></svg>
<svg style="left:1398px;top:542px" width="25" height="22" viewBox="0 0 25 22"><path d="M3.4 12.4L12.4 3.6L21.6 12.4V20.6H3.4Z" fill="#e6e8ec" stroke="#b9bec8" stroke-width="0.8"/><rect x="9.9" y="11.8" width="5" height="8.8" fill="#a8743a"/><path d="M1.4 12.6L12.4 1.8L23.6 12.6" fill="none" stroke="#c0201c" stroke-width="2.4" stroke-linejoin="miter"/></svg>
<svg style="left:1413px;top:596.6px" width="23" height="22" viewBox="0 0 23 22"><path d="M5.1 0.9H16.6L21.5 5.800000000000001V20.299999999999997H5.1Z" fill="#fff" stroke="#bfc5cc" stroke-width="0.9" stroke-linejoin="round"/><path d="M16.6 0.9V5.800000000000001H21.5" fill="#f2f4f6" stroke="#bfc5cc" stroke-width="0.8" stroke-linejoin="round"/><path d="M1 5.4V15.2A6.2 1.8 0 0 0 13.4 15.2V5.4Z" fill="#1fa898"/><ellipse cx="7.2" cy="5.4" rx="6.2" ry="1.8" fill="#45c4b4"/><text x="7.2" y="14.6" text-anchor="middle" font-family="Liberation Sans,sans-serif" font-weight="700" font-size="9" fill="#fff">R</text></svg>
<svg style="left:1413px;top:626.6px" width="23" height="22" viewBox="0 0 23 22"><path d="M5.1 0.9H16.6L21.5 5.800000000000001V20.299999999999997H5.1Z" fill="#fff" stroke="#bfc5cc" stroke-width="0.9" stroke-linejoin="round"/><path d="M16.6 0.9V5.800000000000001H21.5" fill="#f2f4f6" stroke="#bfc5cc" stroke-width="0.8" stroke-linejoin="round"/><circle cx="6.9" cy="9.2" r="5.8" fill="#eef2fb" stroke="#9aa8c8" stroke-width="0.9"/><path d="M6.9 5.6V9.6H9.8" fill="none" stroke="#333" stroke-width="0.9"/></svg>
<svg style="left:1413px;top:656.6px" width="23" height="22" viewBox="0 0 23 22"><path d="M5.1 0.9H16.6L21.5 5.800000000000001V20.299999999999997H5.1Z" fill="#fff" stroke="#bfc5cc" stroke-width="0.9" stroke-linejoin="round"/><path d="M16.6 0.9V5.800000000000001H21.5" fill="#f2f4f6" stroke="#bfc5cc" stroke-width="0.8" stroke-linejoin="round"/><path d="M6.95 5.42L7.02 3.27L8.98 3.27L9.05 5.42L10.35 5.96L11.92 4.49L13.31 5.88L11.84 7.45L12.38 8.75L14.53 8.82L14.53 10.78L12.38 10.85L11.84 12.15L13.31 13.72L11.92 15.11L10.35 13.64L9.05 14.18L8.98 16.33L7.02 16.33L6.95 14.18L5.65 13.64L4.08 15.11L2.69 13.72L4.16 12.15L3.62 10.85L1.47 10.78L1.47 8.82L3.62 8.75L4.16 7.45L2.69 5.88L4.08 4.49L5.65 5.96Z" fill="#5b87a8" stroke="#5b87a8" stroke-width="0.6" stroke-linejoin="round"/><circle cx="8" cy="9.8" r="2" fill="#fff" stroke="#5b87a8" stroke-width="0.5"/></svg>
<svg style="left:1413.6px;top:688.6px" width="22" height="19" viewBox="0 0 22 19"><g transform="translate(0 0)"><path d="M8.6 3.4L11.2 0.6H18.6Q20.4 0.6 20.4 2.4V16.2H8.6Z" fill="#efe9d2" stroke="#d8c48a" stroke-width="0.7"/><path d="M0.6 4.6Q0.6 3.4 1.8 3.4H8.6L11.2 0.8H17.6Q18.8 0.8 18.8 2V17.0H0.6Z" fill="url(#gfld2)" stroke="#c9a030" stroke-width="0.9" stroke-linejoin="round"/><path d="M1 5.2H18.4" stroke="#d0a838" stroke-width="0.6" opacity="0.7"/></g></svg>
<svg style="left:1413.6px;top:718.6px" width="22" height="19" viewBox="0 0 22 19"><g transform="translate(0 0)"><path d="M8.6 3.4L11.2 0.6H18.6Q20.4 0.6 20.4 2.4V16.2H8.6Z" fill="#efe9d2" stroke="#d8c48a" stroke-width="0.7"/><path d="M0.6 4.6Q0.6 3.4 1.8 3.4H8.6L11.2 0.8H17.6Q18.8 0.8 18.8 2V17.0H0.6Z" fill="url(#gfld2)" stroke="#c9a030" stroke-width="0.9" stroke-linejoin="round"/><path d="M1 5.2H18.4" stroke="#d0a838" stroke-width="0.6" opacity="0.7"/></g></svg>
<span class="t" style="left:7.30px;top:5.57px;font:400 14px/18px 'Liberation Serif',serif;color:#ffffff;">R</span>
<span class="t" style="left:27.70px;top:4.50px;font:400 15px/20px 'Liberation Sans',sans-serif;color:#000;letter-spacing:-0.429px;">RStudio</span>
<span class="t" style="left:7.60px;top:31.70px;font:400 15px/20px 'Liberation Sans',sans-serif;color:#1a1a2a;letter-spacing:-0.624px;">File</span>
<span class="t" style="left:44.90px;top:31.70px;font:400 15px/20px 'Liberation Sans',sans-serif;color:#1a1a2a;letter-spacing:-0.186px;">Edit</span>
<span class="t" style="left:85.90px;top:31.70px;font:400 15px/20px 'Liberation Sans',sans-serif;color:#1a1a2a;letter-spacing:-0.253px;">Code</span>
<span class="t" style="left:136.30px;top:31.70px;font:400 15px/20px 'Liberation Sans',sans-serif;color:#1a1a2a;letter-spacing:-0.283px;">View</span>
<span class="t" style="left:183.80px;top:31.70px;font:400 15px/20px 'Liberation Sans',sans-serif;color:#1a1a2a;letter-spacing:-0.290px;">Plots</span>
<span class="t" style="left:231.30px;top:31.70px;font:400 15px/20px 'Liberation Sans',sans-serif;color:#1a1a2a;letter-spacing:-0.662px;">Session</span>
<span class="t" style="left:296.70px;top:31.70px;font:400 15px/20px 'Liberation Sans',sans-serif;color:#1a1a2a;letter-spacing:-0.440px;">Build</span>
<span class="t" style="left:345.00px;top:31.70px;font:400 15px/20px 'Liberation Sans',sans-serif;color:#1a1a2a;letter-spacing:-0.051px;">Debug</span>
<span class="t" style="left:405.20px;top:31.70px;font:400 15px/20px 'Liberation Sans',sans-serif;color:#1a1a2a;letter-spacing:-0.155px;">Profile</span>
<span class="t" style="left:462.60px;top:31.70px;font:400 15px/20px 'Liberation Sans',sans-serif;color:#1a1a2a;letter-spacing:-0.408px;">Tools</span>
<span class="t" style="left:512.70px;top:31.70px;font:400 15px/20px 'Liberation Sans',sans-serif;color:#1a1a2a;letter-spacing:-0.153px;">Help</span>
<span class="t" style="left:318.50px;top:63.40px;font:400 15px/20px 'Liberation Sans',sans-serif;color:#7d7d7d;letter-spacing:0.281px;">Go to file/function</span>
<span class="t" style="left:555.00px;top:63.30px;font:400 15px/20px 'Liberation Sans',sans-serif;color:#1a1a2a;letter-spacing:-0.115px;">Addins</span>
<span class="t" style="left:1794.50px;top:63.30px;font:400 15px/20px 'Liberation Sans',sans-serif;color:#55525e;letter-spacing:-0.170px;">Project: (None)</span>
<span class="t" style="left:50.40px;top:103.90px;font:400 15px/20px 'Liberation Sans',sans-serif;color:#1a1a2a;letter-spacing:0.025px;">Untitled1</span>
<span class="t" style="left:185.20px;top:135.50px;font:400 15px/20px 'Liberation Sans',sans-serif;color:#1a1a2a;letter-spacing:-0.388px;">Source on Save</span>
<span class="t" style="left:1050.00px;top:136.00px;font:400 15px/20px 'Liberation Sans',sans-serif;color:#1a1a2a;letter-spacing:-1.166px;">Run</span>
<span class="t" style="left:1238.00px;top:136.00px;font:400 15px/20px 'Liberation Sans',sans-serif;color:#1a1a2a;letter-spacing:-0.426px;">Source</span>
<span class="t" style="left:40.60px;top:157.84px;font:400 17.5px/23px 'DejaVu Sans Mono','Liberation Mono',monospace;color:#333;">1</span>
<span class="t" style="left:41.20px;top:589.08px;font:400 14.5px/19px 'Liberation Sans',sans-serif;color:#505d6b;letter-spacing:-1.500px;">1:1</span>
<span class="t" style="left:97.20px;top:589.08px;font:400 14.5px/19px 'Liberation Sans',sans-serif;color:#505d6b;letter-spacing:-0.163px;">(Top Level)</span>
<span class="t" style="left:1279.50px;top:589.08px;font:400 14.5px/19px 'Liberation Sans',sans-serif;color:#505d6b;letter-spacing:-0.154px;">R Script</span>
<span class="t" style="left:24.20px;top:625.60px;font:700 15px/20px 'Liberation Sans',sans-serif;color:#000;letter-spacing:-0.598px;">Console</span>
<span class="t" style="left:106.00px;top:625.60px;font:700 15px/20px 'Liberation Sans',sans-serif;color:#000;letter-spacing:-0.101px;">Terminal</span>
<span class="t" style="left:210.40px;top:625.60px;font:700 15px/20px 'Liberation Sans',sans-serif;color:#000;letter-spacing:-0.371px;">Background Jobs</span>
<span class="t" style="left:63.40px;top:657.66px;font:400 16px/21px 'Liberation Sans',sans-serif;color:#1a1a2a;letter-spacing:-0.682px;">R 4.3.2</span>
<span class="t" style="left:118.60px;top:657.66px;font:400 16px/21px 'Liberation Sans',sans-serif;color:#1a1a2a;">·</span>
<span class="t" style="left:132.30px;top:657.66px;font:400 16px/21px 'Liberation Sans',sans-serif;color:#1a1a2a;letter-spacing:0.903px;">~/</span>
<span class="t" style="left:19.60px;top:676.55px;font:400 17.5px/23px 'DejaVu Sans Mono','Liberation Mono',monospace;color:#000;letter-spacing:0.504px;">R es un software libre y viene sin GARANTIA ALGUNA.</span>
<span class="t" style="left:19.60px;top:698.55px;font:400 17.5px/23px 'DejaVu Sans Mono','Liberation Mono',monospace;color:#000;letter-spacing:0.504px;">Usted puede redistribuirlo bajo ciertas circunstancias.</span>
<span class="t" style="left:19.60px;top:720.55px;font:400 17.5px/23px 'DejaVu Sans Mono','Liberation Mono',monospace;color:#000;letter-spacing:0.504px;">Escriba 'license()' o 'licence()' para detalles de distribucion.</span>
<span class="t" style="left:19.60px;top:764.55px;font:400 17.5px/23px 'DejaVu Sans Mono','Liberation Mono',monospace;color:#000;letter-spacing:0.504px;">R es un proyecto colaborativo con muchos contribuyentes.</span>
<span class="t" style="left:19.60px;top:786.55px;font:400 17.5px/23px 'DejaVu Sans Mono','Liberation Mono',monospace;color:#000;letter-spacing:0.504px;">Escriba 'contributors()' para obtener más información y</span>
<span class="t" style="left:19.60px;top:808.55px;font:400 17.5px/23px 'DejaVu Sans Mono','Liberation Mono',monospace;color:#000;letter-spacing:0.504px;">'citation()' para saber cómo citar R o paquetes de R en publicaciones.</span>
<span class="t" style="left:19.60px;top:852.55px;font:400 17.5px/23px 'DejaVu Sans Mono','Liberation Mono',monospace;color:#000;letter-spacing:0.504px;">Escriba 'demo()' para demostraciones, 'help()' para el sistema on-line de ayuda,</span>
<span class="t" style="left:19.60px;top:874.55px;font:400 17.5px/23px 'DejaVu Sans Mono','Liberation Mono',monospace;color:#000;letter-spacing:0.504px;">o 'help.start()' para abrir el sistema de ayuda HTML con su navegador.</span>
<span class="t" style="left:19.60px;top:896.55px;font:400 17.5px/23px 'DejaVu Sans Mono','Liberation Mono',monospace;color:#000;letter-spacing:0.504px;">Escriba 'q()' para salir de R.</span>
<span class="t" style="left:19.60px;top:940.55px;font:400 17.5px/23px 'DejaVu Sans Mono','Liberation Mono',monospace;color:#000;letter-spacing:0.504px;">[Workspace loaded from ~/.RData]</span>
<span class="t" style="left:19.60px;top:984.55px;font:400 17.5px/23px 'DejaVu Sans Mono','Liberation Mono',monospace;color:#930f80;letter-spacing:0.504px;">&gt;</span>
<span class="t" style="left:1377.60px;top:103.50px;font:700 15px/20px 'Liberation Sans',sans-serif;color:#000;letter-spacing:-0.059px;">Environment</span>
<span class="t" style="left:1493.80px;top:103.50px;font:700 15px/20px 'Liberation Sans',sans-serif;color:#000;letter-spacing:0.052px;">History</span>
<span class="t" style="left:1571.30px;top:103.50px;font:700 15px/20px 'Liberation Sans',sans-serif;color:#000;letter-spacing:-0.294px;">Connections</span>
<span class="t" style="left:1685.00px;top:103.50px;font:700 15px/20px 'Liberation Sans',sans-serif;color:#000;letter-spacing:0.087px;">Tutorial</span>
<span class="t" style="left:1479.60px;top:136.80px;font:400 15px/20px 'Liberation Sans',sans-serif;color:#1a1a2a;letter-spacing:0.577px;">Import</span>
<span class="t" style="left:1587.50px;top:136.80px;font:400 15px/20px 'Liberation Sans',sans-serif;color:#1a1a2a;letter-spacing:-0.154px;">115 MiB</span>
<span class="t" style="left:1808.80px;top:136.30px;font:400 15px/20px 'Liberation Sans',sans-serif;color:#1a1a2a;letter-spacing:-0.615px;">List</span>
<span class="t" style="left:1376.80px;top:165.60px;font:400 15px/20px 'Liberation Sans',sans-serif;color:#1a1a2a;">R</span>
<span class="t" style="left:1453.00px;top:165.60px;font:400 15px/20px 'Liberation Sans',sans-serif;color:#1a1a2a;letter-spacing:-0.031px;">Global Environment</span>
<span class="t" style="left:1557.60px;top:240.68px;font:400 16.5px/21px 'Liberation Sans',sans-serif;color:#1a1a2a;letter-spacing:-0.035px;">Environment is empty</span>
<span class="t" style="left:1377.50px;top:483.50px;font:700 15px/20px 'Liberation Sans',sans-serif;color:#000;letter-spacing:-0.672px;">Files</span>
<span class="t" style="left:1434.20px;top:483.50px;font:700 15px/20px 'Liberation Sans',sans-serif;color:#000;letter-spacing:-0.347px;">Plots</span>
<span class="t" style="left:1494.80px;top:483.50px;font:700 15px/20px 'Liberation Sans',sans-serif;color:#000;letter-spacing:-0.562px;">Packages</span>
<span class="t" style="left:1585.60px;top:483.50px;font:700 15px/20px 'Liberation Sans',sans-serif;color:#000;letter-spacing:0.195px;">Help</span>
<span class="t" style="left:1644.50px;top:483.50px;font:700 15px/20px 'Liberation Sans',sans-serif;color:#000;letter-spacing:0.021px;">Viewer</span>
<span class="t" style="left:1718.40px;top:483.50px;font:700 15px/20px 'Liberation Sans',sans-serif;color:#000;letter-spacing:-0.087px;">Presentation</span>
<span class="t" style="left:1890.00px;top:544.80px;font:400 15px/20px 'Liberation Sans',sans-serif;color:#111;">...</span>
<span class="t" style="left:1433.00px;top:543.70px;font:400 15px/20px 'Liberation Sans',sans-serif;color:#3b45c6;letter-spacing:-0.005px;">Home</span>
<span class="t" style="left:1469.00px;top:571.20px;font:400 15px/20px 'Liberation Sans',sans-serif;color:#55525e;letter-spacing:-0.205px;">Name</span>
<span class="t" style="left:1726.00px;top:571.20px;font:400 15px/20px 'Liberation Sans',sans-serif;color:#55525e;letter-spacing:-1.062px;">Size</span>
<span class="t" style="left:1836.00px;top:571.20px;font:400 15px/20px 'Liberation Sans',sans-serif;color:#55525e;letter-spacing:0.328px;">Modified</span>
<span class="t" style="left:1445.80px;top:601.16px;font:400 16px/21px 'Liberation Sans',sans-serif;color:#1a1aa6;letter-spacing:-0.479px;">.RData</span>
<span class="t" style="left:1726.40px;top:601.16px;font:400 16px/21px 'Liberation Sans',sans-serif;color:#1a1a2a;letter-spacing:-0.706px;">2.5 KB</span>
<span class="t" style="left:1836.80px;top:601.16px;font:400 16px/21px 'Liberation Sans',sans-serif;color:#1a1a2a;letter-spacing:-0.108px;">May 13, 2</span>
<span class="t" style="left:1445.80px;top:631.16px;font:400 16px/21px 'Liberation Sans',sans-serif;color:#1a1aa6;">.Rhistory</span>
<span class="t" style="left:1726.40px;top:631.16px;font:400 16px/21px 'Liberation Sans',sans-serif;color:#1a1a2a;letter-spacing:-0.573px;">15.6 KB</span>
<span class="t" style="left:1836.80px;top:631.16px;font:400 16px/21px 'Liberation Sans',sans-serif;color:#1a1a2a;letter-spacing:-0.108px;">May 29, 2</span>
<span class="t" style="left:1445.80px;top:661.16px;font:400 16px/21px 'Liberation Sans',sans-serif;color:#1a1aa6;letter-spacing:0.240px;">desktop.ini</span>
<span class="t" style="left:1726.40px;top:661.16px;font:400 16px/21px 'Liberation Sans',sans-serif;color:#1a1a2a;letter-spacing:-0.428px;">418 B</span>
<span class="t" style="left:1836.80px;top:661.16px;font:400 16px/21px 'Liberation Sans',sans-serif;color:#1a1a2a;letter-spacing:-0.504px;">Jan 28, 20</span>
<span class="t" style="left:1445.80px;top:691.16px;font:400 16px/21px 'Liberation Sans',sans-serif;color:#1a1aa6;letter-spacing:0.047px;">Plantillas personalizadas de Office</span>
<span class="t" style="left:1445.80px;top:721.16px;font:400 16px/21px 'Liberation Sans',sans-serif;color:#1a1aa6;letter-spacing:0.598px;">Zoom</span>
<div class="a" style="left:9px;top:95px;width:1354px;height:496px;border:5px solid #ed1c24;"></div>
</body></html>
